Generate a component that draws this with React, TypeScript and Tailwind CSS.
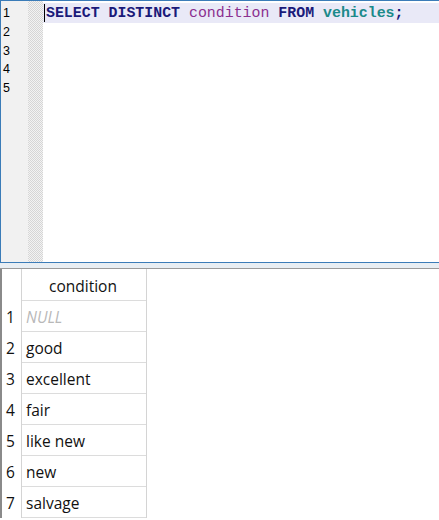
import React from 'react';

const rows = ['NULL', 'good', 'excellent', 'fair', 'like new', 'new', 'salvage'];

const App: React.FC = () => {
  return (
    <div className="w-[439px] h-[520px] overflow-hidden bg-white">
      {/* Editor */}
      <div className="h-[263px] flex border-l border-t border-b border-[#3b7cb8]">
        <div className="w-[42px] flex shrink-0">
          <div className="w-[27px] bg-[#f1f1f1] flex flex-col pt-[3px] pl-[2px] font-['Liberation_Sans',sans-serif] text-[12.5px] text-black">
            {[1, 2, 3, 4, 5].map(n => (
              <div key={n} className="h-[18.8px] leading-[18.8px]">{n}</div>
            ))}
          </div>
          <div className="flex-1 bg-[conic-gradient(#d6d6d6_25%,#f3f3f3_0_50%,#d6d6d6_0_75%,#f3f3f3_0)] bg-[length:2px_2px]" />
        </div>
        <div className="flex-1 pt-[2px]">
          <div className="h-[20px] bg-[#e9e9f7] flex items-center whitespace-pre font-['Liberation_Mono',monospace] text-[14.9px] font-bold">
            <div className="w-[1px] h-[18px] bg-black ml-[1px] mr-[1px]" />
            <span className="text-[#1a1a7a]">SELECT DISTINCT </span>
            <span className="text-[#8b2f8f] font-normal">condition</span>
            <span className="text-[#1a1a7a]"> FROM </span>
            <span className="text-[#1b8a8a]">vehicles</span>
            <span className="text-[#1a1a7a]">;</span>
          </div>
        </div>
      </div>
      <div className="h-[6px] bg-[#e8eef3] border-b border-[#9a9a9a]" />

      {/* Results grid */}
      <div className="flex font-['Open_Sans','Liberation_Sans',sans-serif] text-[15.5px] text-[#111]">
        <div className="w-[22px] border-l-2 border-[#8a8a8a] border-r border-r-[#d4d4d4] bg-white">
          <div className="h-[32px]" />
          {rows.map((_, i) => (
            <div key={i} className="h-[31px] leading-[32px] text-center pr-[2px]">{i + 1}</div>
          ))}
        </div>
        <div className="w-[125px] border-r border-[#d4d4d4]">
          <div className="h-[32px] leading-[34px] text-center pr-[2px] border-b border-[#dcdcdc]">condition</div>
          {rows.map((r, i) => (
            <div
              key={i}
              className={`h-[31px] leading-[32px] pl-[4px] border-b border-[#dcdcdc] ${r === 'NULL' ? 'italic text-[#b8b8b8]' : ''}`}
            >
              {r}
            </div>
          ))}
        </div>
      </div>
    </div>
  );
};

export default App;
